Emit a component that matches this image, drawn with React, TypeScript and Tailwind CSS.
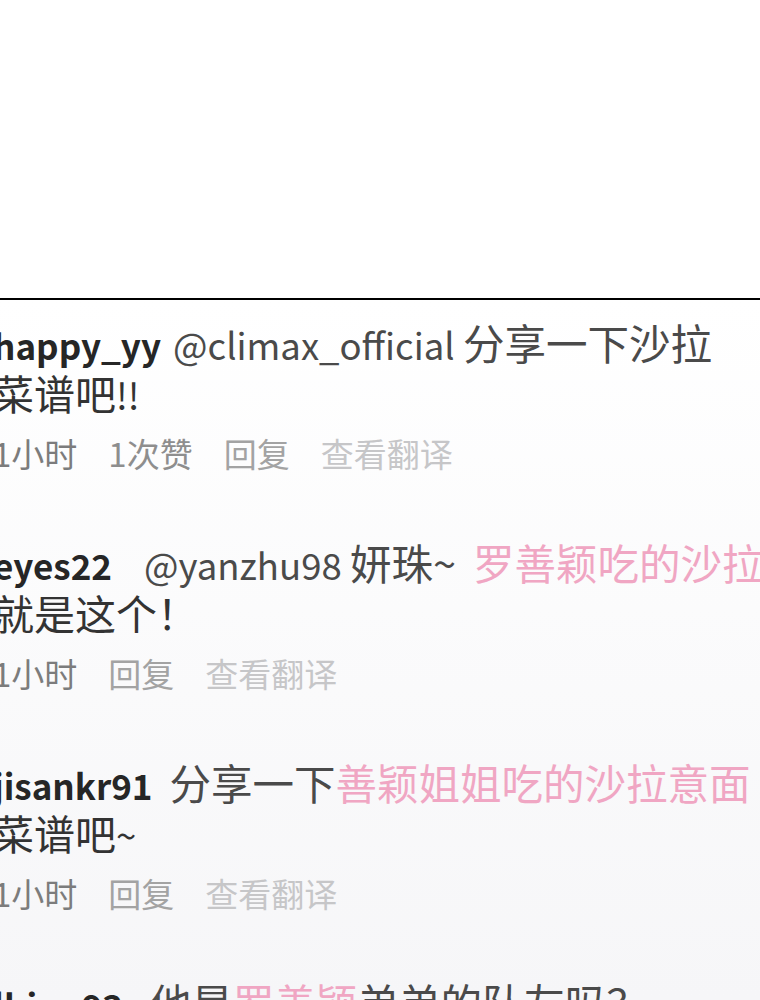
type Part = { t: string; pink?: boolean; lat?: boolean; cls?: string };

type Comment = {
  user: string;
  userCls?: string;
  line1: Part[];
  line2: Part[];
  likes?: string;
};

const comments: Comment[] = [
  {
    user: "happy_yy",
    line1: [{ t: "@climax_official ", lat: true }, { t: "分享一下沙拉" }],
    line2: [{ t: "菜谱吧" }, { t: "!!", lat: true }],
    likes: "1次赞",
  },
  {
    user: "eyes22",
    userCls: "mr-[32px]",
    line1: [
      { t: "@yanzhu98 ", lat: true },
      { t: "妍珠" },
      { t: "~", cls: "mr-[17px]" },
      { t: "罗善颖吃的沙拉", pink: true },
    ],
    line2: [{ t: "就是这个！" }],
  },
  {
    user: "jisankr91",
    userCls: "mr-[17px]",
    line1: [{ t: "分享一下" }, { t: "善颖姐姐吃的沙拉意面", pink: true }],
    line2: [{ t: "菜谱吧" }, { t: "~", lat: true }],
  },
  {
    user: "lhiuu93",
    userCls: "mr-[27px]",
    line1: [{ t: "他是" }, { t: "罗善颖", pink: true }, { t: "弟弟的队友吗？" }],
    line2: [],
  },
];

function Text({ parts }: { parts: Part[] }) {
  return (
    <>
      {parts.map((p, i) => (
        <span
          key={i}
          className={
            (p.pink ? "text-[#f0a6c3] " : "") +
            (p.lat ? "text-[36.5px] " : "") +
            (p.cls ?? "")
          }
        >
          {p.t}
        </span>
      ))}
    </>
  );
}

function CommentRow({ c }: { c: Comment }) {
  return (
    <div className="flex flex-col">
      <div className="h-[50px] leading-[50px] text-[41.5px] text-[#4a4a4a] whitespace-nowrap">
        <span className={"font-bold text-[35px] text-[#262626] " + (c.userCls ?? "mr-[12px]")}>
          {c.user}
        </span>
        <Text parts={c.line1} />
      </div>
      <div className="h-[50px] leading-[50px] text-[41px] text-[#333333] whitespace-nowrap">
        <Text parts={c.line2} />
      </div>
      <div className="mt-[16px] h-[40px] leading-[40px] text-[33px] flex gap-[31px] whitespace-nowrap">
        <span className="text-[#7c7c7c]">1小时</span>
        {c.likes && <span className="text-[#8e8e8e]">{c.likes}</span>}
        <span className="text-[#a3a3a3]">回复</span>
        <span className="text-[#c6c6c8]">查看翻译</span>
      </div>
    </div>
  );
}

export default function App() {
  return (
    <div
      className="w-[760px] h-[1000px] overflow-hidden bg-white"
      style={{ fontFamily: '"Noto Sans CJK SC", "Noto Sans", sans-serif' }}
    >
      <div className="h-[298px] bg-white" />
      <div className="h-[2px] bg-black" />
      <div className="h-[700px] overflow-hidden bg-gradient-to-b from-white to-[#f6f6f8] pt-[17px]">
        <div className="-ml-[7px] flex flex-col gap-[64px]">
          {comments.map((c, i) => (
            <CommentRow key={i} c={c} />
          ))}
        </div>
      </div>
    </div>
  );
}
